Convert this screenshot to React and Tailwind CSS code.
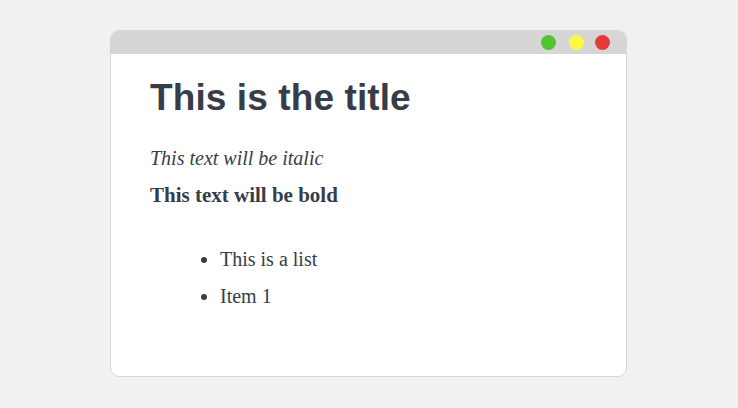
export default function App() {
  return (
    <div className="flex h-screen w-full items-start bg-[#f1f1f1] pl-[110px] pt-[30px]">
      {/* Window */}
      <div className="flex h-[347px] w-[517px] flex-col overflow-hidden rounded-[9px] border border-[#d6d6d6] bg-white">
        {/* Title bar */}
        <div className="flex h-[23px] shrink-0 items-center justify-end bg-[#d6d6d6] pr-[16px]">
          <span className="h-[15px] w-[15px] rounded-full bg-[#52c234]" />
          <span className="ml-[13px] h-[15px] w-[15px] rounded-full bg-[#fbf841]" />
          <span className="ml-[11px] h-[15px] w-[15px] rounded-full bg-[#e63a3a]" />
        </div>

        {/* Content */}
        <div className="px-[39px] pt-[20px] text-[#373d48]">
          <h1 className="font-['Liberation_Sans',Arial,sans-serif] text-[37px] font-bold leading-[48px] tracking-[0.1px]">
            This is the title
          </h1>
          <div className="mt-[18px] font-['Liberation_Serif',Georgia,serif]">
            <p className="text-[20px] italic leading-[37px]">This text will be italic</p>
            <p className="text-[21px] font-bold leading-[37px]">This text will be bold</p>
            <ul className="mt-[27px] list-disc pl-[70px] text-[20px] leading-[37px]">
              <li>This is a list</li>
              <li>Item 1</li>
            </ul>
          </div>
        </div>
      </div>
    </div>
  );
}
